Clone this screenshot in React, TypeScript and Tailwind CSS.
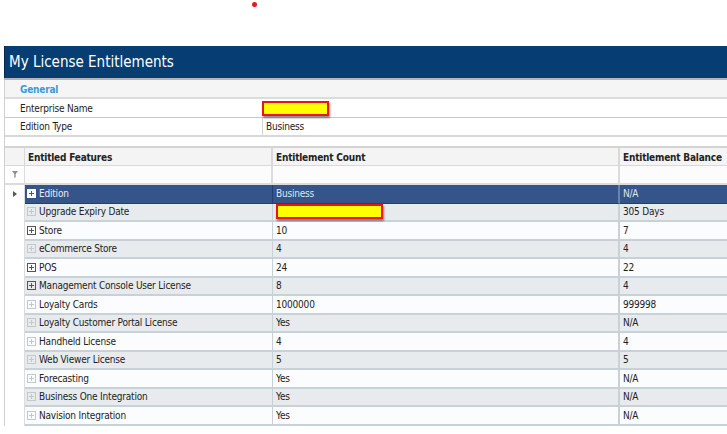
import React from "react";

type Row = {
  name: string;
  count: string;
  balance: string;
  expandable?: boolean;
  masked?: boolean;
};

const rows: Row[] = [
  { name: "Upgrade Expiry Date", count: "", balance: "305 Days", masked: true },
  { name: "Store", count: "10", balance: "7", expandable: true },
  { name: "eCommerce Store", count: "4", balance: "4" },
  { name: "POS", count: "24", balance: "22", expandable: true },
  { name: "Management Console User License", count: "8", balance: "4", expandable: true },
  { name: "Loyalty Cards", count: "1000000", balance: "999998" },
  { name: "Loyalty Customer Portal License", count: "Yes", balance: "N/A" },
  { name: "Handheld License", count: "4", balance: "4" },
  { name: "Web Viewer License", count: "5", balance: "5" },
  { name: "Forecasting", count: "Yes", balance: "N/A" },
  { name: "Business One Integration", count: "Yes", balance: "N/A" },
  { name: "Navision Integration", count: "Yes", balance: "N/A" },
];

const PlusBox = ({ tone }: { tone: "dark" | "faint" | "selected" }) => {
  const stroke = tone === "dark" ? "#555" : tone === "faint" ? "#c4c8cc" : "#3a5a8c";
  const fill = tone === "selected" ? "#ffffff" : "none";
  const boxStroke = tone === "selected" ? "#ffffff" : stroke;
  return (
    <svg width="9" height="9" viewBox="0 0 9 9" className="shrink-0">
      <rect x="0.5" y="0.5" width="8" height="8" fill={fill} stroke={boxStroke} />
      <path d="M2 4.5h5M4.5 2v5" stroke={stroke} strokeWidth="1" />
    </svg>
  );
};

const Masked = ({ w }: { w: string }) => (
  <div className={`${w} h-[15px] bg-[#ffff00] border-2 border-[#e8141c] shadow-[1px_2px_2px_rgba(0,0,0,0.45)]`} />
);

export default function App() {
  return (
    <div
      className="w-[727px] h-[434px] bg-white overflow-hidden relative text-[10px] tracking-[-0.2px] text-[#222]"
      style={{ fontFamily: '"DejaVu Sans Condensed", "DejaVu Sans", sans-serif' }}
    >
      <div className="absolute left-[252px] top-[2px] w-[5px] h-[5px] rounded-full bg-[#e01b1b]" />

      <div className="pt-[46px] pl-[4px]">
        <div className="h-[32px] bg-[#063d73] border-l border-[#02284d] flex items-center pl-[4px]">
          <span className="text-white text-[15px] leading-none tracking-normal">
            My License Entitlements
          </span>
        </div>
        <div className="h-[2px] bg-[#b5b5b8]" />

        <div className="border-l border-[#d0d0d0]">
          <div className="h-[19px] bg-[#f5f5f5] border-b-2 border-[#dcdcdc] flex items-center pl-[15px] pt-[2px]">
            <span className="font-bold text-[#3a9ad9]">General</span>
          </div>
          <div className="h-[19px] border-b border-[#c8c8c8] flex items-center">
            <div className="w-[257px] pl-[15px]">Enterprise Name</div>
            <Masked w="w-[67px]" />
          </div>
          <div className="h-[19px] border-b-2 border-[#d8d8d8] flex items-center">
            <div className="w-[258px] pl-[15px] h-full flex items-center border-r border-[#d6d6d6]">
              Edition Type
            </div>
            <div className="pl-[3px]">Business</div>
          </div>
          <div className="h-[11px] border-b-2 border-[#d4d4d4]" />

          <div className="grid grid-cols-[20px_248px_347px_1fr]">
            {/* header */}
            <div className="h-[18px] bg-[#f4f4f4] border-r border-b border-[#d9d9d9]" />
            <div className="h-[18px] bg-[#f4f4f4] border-r-2 border-b border-[#d9d9d9] flex items-center pl-[3px] pt-px font-bold">
              Entitled Features
            </div>
            <div className="h-[18px] bg-[#f4f4f4] border-r-2 border-b border-[#d9d9d9] flex items-center pl-[3px] pt-px font-bold">
              Entitlement Count
            </div>
            <div className="h-[18px] bg-[#f4f4f4] border-b border-[#d9d9d9] flex items-center pl-[3px] pt-px font-bold whitespace-nowrap">
              Entitlement Balance
            </div>

            {/* filter row */}
            <div className="h-[19px] bg-white border-r border-b-2 border-[#dcdcdc] flex items-center justify-center">
              <svg width="6" height="7" viewBox="0 0 6 7">
                <path d="M0 0h6L3.7 3V6.3L2.3 7V3z" fill="#8a8f96" />
              </svg>
            </div>
            <div className="h-[19px] bg-[#fcfcfd] border-r-2 border-b-2 border-[#dcdcdc]" />
            <div className="h-[19px] bg-[#fcfcfd] border-r-2 border-b-2 border-[#dcdcdc]" />
            <div className="h-[19px] bg-[#fcfcfd] border-b-2 border-[#dcdcdc]" />

            {/* selected row */}
            <div className="h-[18.5px] bg-white border-r border-[#dcdcdc] flex items-center justify-center">
              <svg width="4" height="6" viewBox="0 0 4 6">
                <path d="M0 0L4 3L0 6z" fill="#555" />
              </svg>
            </div>
            <div className="h-[18.5px] bg-[#34548a] border-r border-b border-[#22406e] flex items-center gap-[3px] pl-[2px] text-[#e8edf5]">
              <PlusBox tone="selected" />
              Edition
            </div>
            <div className="h-[18.5px] bg-[#34548a] border-r-2 border-b border-[#22406e] border-r-[#6c82a8] flex items-center pl-[3px] text-[#dfe6f0]">
              Business
            </div>
            <div className="h-[18.5px] bg-[#34548a] border-b border-[#22406e] flex items-center pl-[3px] text-[#dfe6f0]">
              N/A
            </div>

            {rows.map((r, i) => {
              const bg = i % 2 === 0 ? "bg-[#e8ebee]" : "bg-[#fbfcfd]";
              return (
                <React.Fragment key={r.name}>
                  <div className="h-[18.5px] bg-white border-r border-[#dcdcdc]" />
                  <div
                    className={`h-[18.5px] ${bg} border-r border-b-2 border-[#c8d0d8] flex items-center gap-[3px] pl-[2px]`}
                  >
                    <PlusBox tone={r.expandable ? "dark" : "faint"} />
                    <span className="whitespace-nowrap">{r.name}</span>
                  </div>
                  <div
                    className={`h-[18.5px] ${bg} border-r-2 border-b-2 border-[#c8d0d8] flex items-center pl-[3px]`}
                  >
                    {r.masked ? <Masked w="w-[107px]" /> : r.count}
                  </div>
                  <div className={`h-[18.5px] ${bg} border-b-2 border-[#c8d0d8] flex items-center pl-[3px]`}>
                    {r.balance}
                  </div>
                </React.Fragment>
              );
            })}
          </div>
        </div>
      </div>
    </div>
  );
}
